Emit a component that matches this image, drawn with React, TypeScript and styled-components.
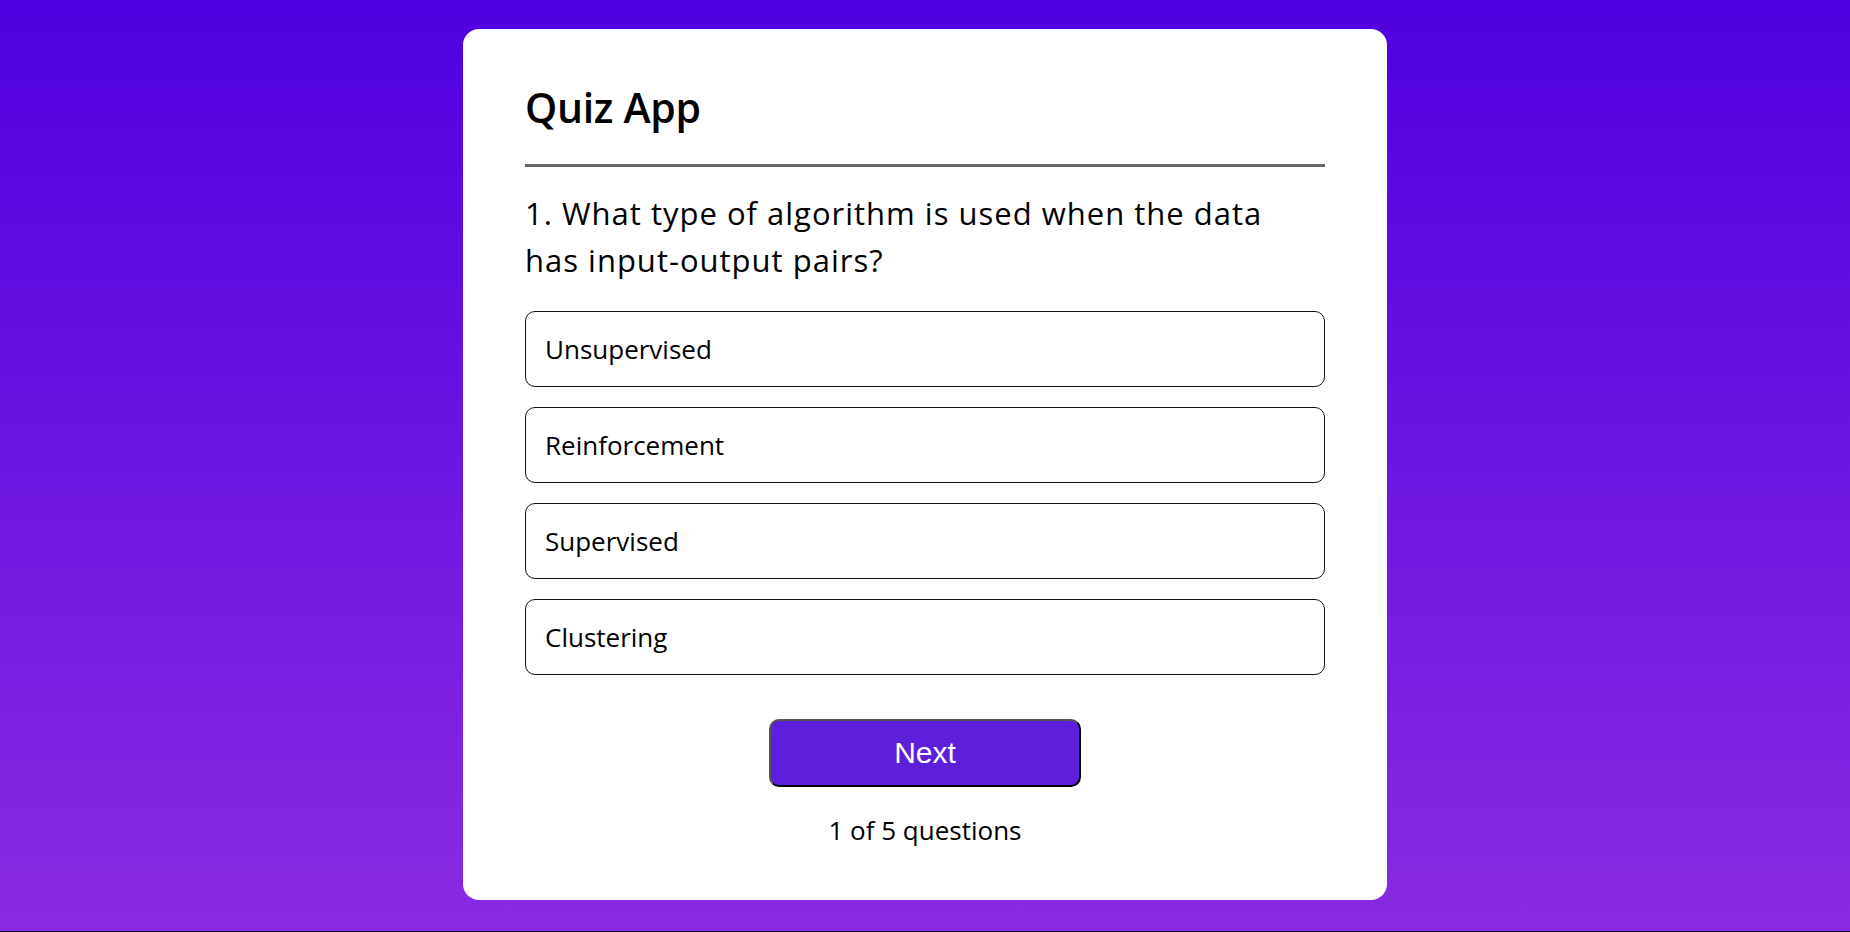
import React, { useState } from "react";
import styled, { createGlobalStyle } from "styled-components";

const GlobalStyle = createGlobalStyle`
  * { box-sizing: border-box; }
  html, body { margin: 0; padding: 0; }
  body {
    font-family: "Open Sans", "Noto Sans", sans-serif;
    background: #111;
  }
`;

const Page = styled.div`
  height: 931px;
  background: linear-gradient(to bottom, #4f00e0, #8a2be2);
  padding-top: 29px;
  overflow: hidden;
`;

const Card = styled.div`
  width: 924px;
  margin: 0 auto;
  background: #fff;
  border-radius: 16px;
  padding: 48px 62px 0;
  height: 871px;
  display: flex;
  flex-direction: column;
`;

const Title = styled.h1`
  margin: 0;
  font-size: 41px;
  line-height: 60px;
  font-weight: 600;
  letter-spacing: -0.3px;
  color: #000;
`;

const Divider = styled.hr`
  margin: 27px 0 0;
  border: none;
  height: 2.5px;
  background: #666;
`;

const Question = styled.h2`
  margin: 23.5px 0 0;
  max-width: 765px;
  font-size: 31px;
  line-height: 46.5px;
  font-weight: 400;
  letter-spacing: 1px;
  color: #000;
`;

const Options = styled.ul`
  list-style: none;
  margin: 28px 0 0;
  padding: 0;
  display: flex;
  flex-direction: column;
  gap: 20px;
`;

const Option = styled.li<{ $selected?: boolean }>`
  height: 76px;
  display: flex;
  align-items: center;
  padding-left: 19px;
  border: 1px solid #111;
  border-radius: 10px;
  font-size: 26px;
  color: #000;
  cursor: pointer;
  background: ${(p) => (p.$selected ? "#f2ecff" : "#fff")};
`;

const NextButton = styled.button`
  align-self: center;
  margin-top: 44px;
  width: 312px;
  height: 68px;
  background: #5e1fdc;
  color: #fff;
  font-family: "Liberation Sans", Arial, sans-serif;
  font-size: 30px;
  border-width: 2px;
  border-style: solid;
  border-color: #555 #000 #000 #555;
  border-radius: 10px;
  cursor: pointer;
`;

const Progress = styled.div`
  margin-top: 25px;
  text-align: center;
  font-size: 26px;
  line-height: 36px;
  color: #000;
`;

const options = ["Unsupervised", "Reinforcement", "Supervised", "Clustering"];

export default function App() {
  const [selected, setSelected] = useState<number | null>(null);
  return (
    <>
      <GlobalStyle />
      <Page>
        <Card>
          <Title>Quiz App</Title>
          <Divider />
          <Question>
            1. What type of algorithm is used when the data has input-output pairs?
          </Question>
          <Options>
            {options.map((o, i) => (
              <Option key={o} $selected={selected === i} onClick={() => setSelected(i)}>
                {o}
              </Option>
            ))}
          </Options>
          <NextButton>Next</NextButton>
          <Progress>1 of 5 questions</Progress>
        </Card>
      </Page>
    </>
  );
}
